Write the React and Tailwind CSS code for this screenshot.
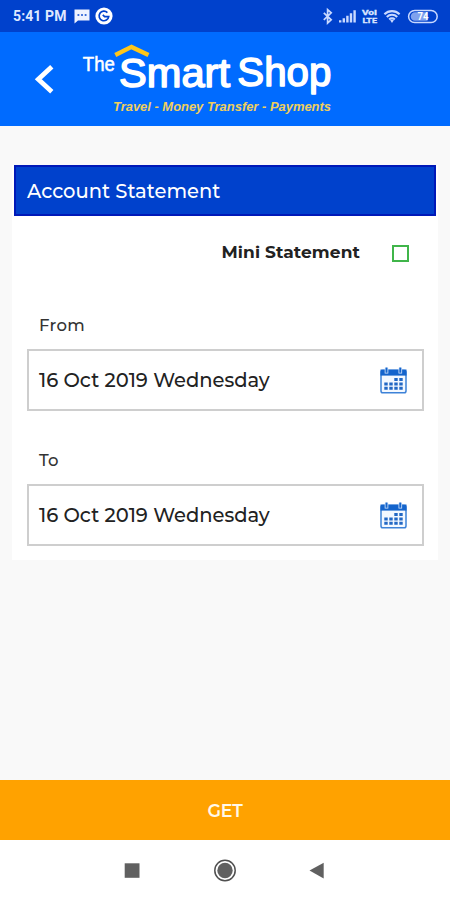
import React from "react";

function ChatIcon() {
  return (
    <svg width="16" height="15" viewBox="0 0 16 15" className="ml-[7px] mt-px">
      <path d="M0.5 0.5H15.5V11.5H4L0.5 14.5Z" fill="#eef2ff" />
      <path d="M3.5 6h1.8M7.1 6h1.8M10.7 6h1.8" stroke="#0041cc" strokeWidth="1.6" />
    </svg>
  );
}

function GIcon() {
  return (
    <svg width="18" height="18" viewBox="0 0 18 18" className="ml-[5px]">
      <circle cx="9" cy="9" r="8.6" fill="#fff" />
      <path d="M12.4 5.6A4.8 4.8 0 1 0 13.7 9.6H9.6L7.8 7.8" fill="none" stroke="#0041cc" strokeWidth="1.7" />
    </svg>
  );
}

function StatusIcons() {
  return (
    <svg width="118" height="18" viewBox="321 7 118 18" stroke="#c9d9ff" fill="none">
      <path d="M323.8 12.8l7.4 7-3.6 3.2V9.6l3.6 3.2-7.4 7" strokeWidth="1.7" />
      <path d="M340.2 22.5v-2.3M343.8 22.5v-4.3M347.4 22.5v-6.8M351 22.5v-9.3M354.6 22.5V10.2" strokeWidth="2.4" />
      <g fill="#dbe5ff" stroke="#dbe5ff" strokeWidth="0.3" fontWeight="700" fontFamily="Roboto, sans-serif">
        <text x="362" y="14.8" fontSize="6.5" textLength="15" lengthAdjust="spacingAndGlyphs">VoI</text>
        <text x="362.5" y="22.8" fontSize="6.8" textLength="14.5" lengthAdjust="spacingAndGlyphs">LTE</text>
      </g>
      <path d="M384.4 14.2a11 11 0 0 1 15.2 0M386.8 16.9a7.4 7.4 0 0 1 10.4 0M389.2 19.4a4 4 0 0 1 5.6 0" strokeWidth="2.1" />
      <path d="M390.2 20.3a2.6 2.6 0 0 1 3.6 0L392 22.9Z" fill="#c9d9ff" stroke="none" />
      <rect x="408.6" y="10.4" width="28.6" height="12.2" rx="6.1" strokeWidth="1.5" />
      <path d="M415 12.2h12.5v8.6H415a4.3 4.3 0 0 1 0-8.6Z" fill="#7fa2ee" stroke="none" />
      <text x="417.5" y="20.4" fontSize="10.5" fontWeight="700" fontFamily="Roboto, sans-serif" fill="#fff" stroke="none" textLength="11" lengthAdjust="spacingAndGlyphs">74</text>
    </svg>
  );
}

function Logo() {
  return (
    <svg width="254" height="78" viewBox="80 40 254 78" fontFamily="'Liberation Sans', Arial, sans-serif">
      <path d="M115.3 55L131.5 46.9L148.5 55" fill="none" stroke="#ffc61a" strokeWidth="4.4" />
      <g fill="#fff" stroke="#fff">
        <text x="82.8" y="70.5" fontSize="19.5" strokeWidth="0.5" textLength="32" lengthAdjust="spacingAndGlyphs">The</text>
        <text x="119" y="86.8" fontSize="40" strokeWidth="1.5" strokeLinejoin="round" textLength="111" lengthAdjust="spacingAndGlyphs">Smart</text>
        <text x="237.3" y="86.3" fontSize="40" strokeWidth="1.5" strokeLinejoin="round" textLength="94" lengthAdjust="spacingAndGlyphs">Shop</text>
      </g>
      <text x="113" y="111" fontSize="13" fontWeight="700" fontStyle="italic" fill="#efcf5c" textLength="218" lengthAdjust="spacingAndGlyphs">Travel - Money Transfer - Payments</text>
    </svg>
  );
}

function CalendarIcon() {
  return (
    <svg width="27" height="27" viewBox="0 0 27 27">
      <rect x="1" y="3.5" width="25" height="22.2" rx="1.8" fill="#f4f9ff" stroke="#3d82d8" strokeWidth="1.5" />
      <path d="M0.5 2.5H26.5V8.6H0.5Z" fill="#1464cc" />
      <path d="M6.5 0.8v5.8M20.3 0.8v5.8" stroke="#d6e6fb" strokeWidth="3.6" />
      <path d="M6.5 0.4v5.4M20.3 0.4v5.4" stroke="#1464cc" strokeWidth="2" />
      <g stroke="#2368c4" strokeWidth="3" strokeDasharray="3.4 1.6">
        <path d="M14.3 12.6H22.7" />
        <path d="M4.3 16.9H22.7" />
        <path d="M4.3 21.3H22.7" />
      </g>
    </svg>
  );
}

function DateField({ label, value }) {
  return (
    <div>
      <div className="h-6 pl-[12.5px] text-[16.5px] font-medium leading-6 tracking-[0.3px] text-[#333]">{label}</div>
      <div className="mt-3 flex h-[62px] items-center justify-between border-2 border-[#cecece] bg-white pl-[10.5px] pr-[15px]">
        <span className="whitespace-nowrap pt-[2px] text-[19.5px] font-medium text-[#222]">{value}</span>
        <CalendarIcon />
      </div>
    </div>
  );
}

export default function App() {
  return (
    <div className="flex h-[900px] w-[450px] flex-col overflow-hidden bg-[#f9f9f9] font-[Montserrat,Inter,sans-serif]">
      <div className="flex h-8 shrink-0 items-center bg-[#0041cc] pl-[13px] pr-[11px]">
        <span className="w-[54px] whitespace-nowrap pt-px font-[Roboto,sans-serif] text-[14px] font-bold tracking-[0.1px] text-[#dfe8ff]">5:41 PM</span>
        <ChatIcon />
        <GIcon />
        <div className="ml-auto"><StatusIcons /></div>
      </div>
      <header className="flex h-[94px] shrink-0 items-start bg-[#006bff] pl-[34px] pt-2">
        <svg width="22" height="32" viewBox="34 63 22 32" className="mt-[23px]">
          <path d="M51.8 66.8L38.3 79.3L51.8 91.8" fill="none" stroke="#fff" strokeWidth="4.8" />
        </svg>
        <div className="ml-6"><Logo /></div>
      </header>
      <main className="flex-1 px-3 pt-[39px]">
        <section className="h-[395px] bg-white">
          <h1 className="mx-[2px] h-[51px] border-2 border-[#0019b8] bg-[#0041cc] pl-[11px] pt-px text-[19.5px] font-medium leading-[47px] text-white">
            Account Statement
          </h1>
          <div className="flex h-[74px] items-center justify-end gap-8 pr-[29px]">
            <span className="whitespace-nowrap text-[17px] font-bold tracking-[0.1px] text-[#222]">Mini Statement</span>
            <span className="size-[17px] border-2 border-[#40b54a]" />
          </div>
          <div className="flex flex-col gap-[37px] pl-[14.5px] pr-[14px] pt-[23px]">
            <DateField label="From" value="16 Oct 2019 Wednesday" />
            <DateField label="To" value="16 Oct 2019 Wednesday" />
          </div>
        </section>
      </main>
      <button className="h-[60px] shrink-0 bg-[#ffa200] pt-[2px] text-[17.5px] font-semibold tracking-[-0.3px] text-[#fff8ea]">GET</button>
      <nav className="h-[60px] shrink-0 bg-white">
        <svg width="450" height="60" viewBox="0 840 450 60" fill="#606060">
          <rect x="124.7" y="863.3" width="14.8" height="14.5" />
          <circle cx="225" cy="870.5" r="7.7" />
          <circle cx="225" cy="870.5" r="10.2" fill="none" stroke="#505050" strokeWidth="1.5" />
          <path d="M309.5 870.5L323.7 862.8V878.4Z" />
        </svg>
      </nav>
    </div>
  );
}
